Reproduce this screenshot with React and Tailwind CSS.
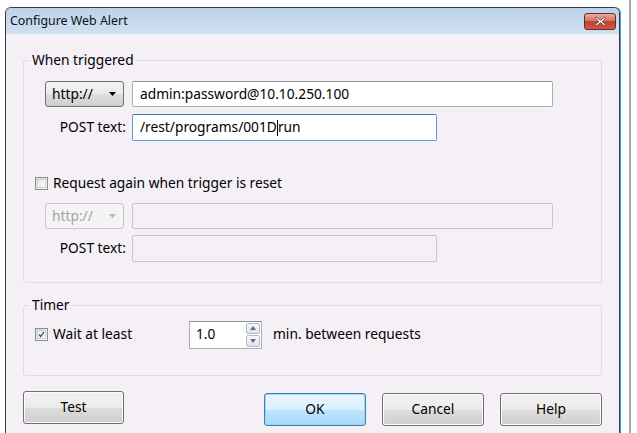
const FONT = { fontFamily: '"Noto Sans", "Open Sans", Arial, sans-serif' };

function Checkbox({ checked }) {
  return (
    <span className="inline-flex w-[13px] h-[13px] shrink-0 items-center justify-center border border-[#8e8f8f] bg-[linear-gradient(135deg,#dcdcdc,#f6f6f6)]">
      <span className="w-[9px] h-[9px] border border-[#d0d0d0] bg-[linear-gradient(135deg,#e6e6e6,#ffffff)] flex items-center justify-center">
        {checked && (
          <svg width="9" height="9" viewBox="0 0 9 9">
            <path d="M1.5 4.5 L3.5 7.2 L7.6 1" fill="none" stroke="#3a4f8f" strokeWidth="1.7" />
          </svg>
        )}
      </span>
    </span>
  );
}

function SchemeSelect({ disabled }) {
  return (
    <div
      className={`w-[79px] h-[26px] rounded-[3px] border flex items-center justify-between pl-[6px] pr-[7px] ${
        disabled
          ? 'border-[#c7c7c7] bg-[#f4f4f4] text-[#a3a3a3]'
          : 'border-[#707070] bg-[linear-gradient(to_bottom,#f2f2f2,#ebebeb_50%,#dddddd_51%,#cfcfcf)] text-black'
      }`}
    >
      <span>http://</span>
      <svg width="7" height="4" viewBox="0 0 7 4">
        <path d="M0 0 H7 L3.5 4 Z" fill={disabled ? '#b5b5b5' : '#000'} />
      </svg>
    </div>
  );
}

function TextBox({ className, focused, disabled, children }) {
  let border = 'border-[#abadb3] border-t-[#8f939c] bg-white';
  if (focused) border = 'border-[#5b9bd5] border-t-[#3d7bad] bg-white';
  if (disabled) border = 'border-[#c7c7c7] bg-[#f4f0f6]';
  return (
    <div className={`border rounded-[2px] flex items-center px-[7px] ${border} ${className}`}>
      {children}
    </div>
  );
}

function Group({ title, className, children }) {
  return (
    <fieldset className="border border-[#d5dfe5] rounded-[3px]">
      <legend className="ml-[6px] px-[2px] leading-[18px]">{title}</legend>
      <div className={className}>{children}</div>
    </fieldset>
  );
}

function Button({ label, primary, className }) {
  return (
    <button
      className={`h-[33px] rounded-[3px] border ${
        primary
          ? 'border-[#3c7fb1] bg-[linear-gradient(to_bottom,#eaf6fd,#d9f0fc_50%,#bee6fd_51%,#a7d9f5)] shadow-[inset_0_0_0_1px_#9ed6f4]'
          : 'border-[#707070] bg-[linear-gradient(to_bottom,#f2f2f2,#ebebeb_50%,#dddddd_51%,#cfcfcf)] shadow-[inset_0_0_0_1px_#fcfcfc]'
      } ${className}`}
    >
      {label}
    </button>
  );
}

function Spinner() {
  return (
    <div className="w-[73px] h-[28px] border border-[#abadb3] border-t-[#8f939c] bg-white flex">
      <span className="flex-1 pl-[6px] leading-[24px]">1.0</span>
      <div className="w-[16px] flex flex-col gap-[1px] p-[1px]">
        {['M0 4 L3 0 L6 4 Z', 'M0 0 H6 L3 4 Z'].map((d) => (
          <div
            key={d}
            className="flex-1 border border-[#b8bcc4] rounded-[2px] bg-[linear-gradient(to_bottom,#f7f7f7,#e2e2e2)] flex items-center justify-center"
          >
            <svg width="6" height="4" viewBox="0 0 6 4">
              <path d={d} fill="#4f6fa8" />
            </svg>
          </div>
        ))}
      </div>
    </div>
  );
}

export default function App() {
  return (
    <div className="w-[637px] h-[433px] bg-white overflow-hidden flex text-[13.75px] text-black" style={FONT}>
      <div className="ml-[5px] mt-[7px] w-[615px] flex flex-col rounded-t-[6px] border border-b-0 border-[#3b3b3b] shadow-[1px_0_0_#3ea0dc] overflow-hidden">
        {/* title bar */}
        <div className="h-[26px] shrink-0 flex items-center justify-between pl-[4px] pr-[3px] bg-[linear-gradient(to_bottom,#b9d1ea,#c4d8ee_40%,#cfe0f2)]">
          <span className="text-[12.4px] text-[#111]">Configure Web Alert</span>
          <div className="w-[32px] h-[17px] rounded-[3px] border border-[#6e2a2a] bg-[linear-gradient(to_bottom,#e9a99c,#d47866_45%,#c0402f_50%,#cc5a44)] flex items-center justify-center">
            <svg width="13" height="11" viewBox="0 0 13 11">
              <path
                d="M2 1 L6.5 4.2 L11 1 L12 2.2 L8 5.5 L12 8.8 L11 10 L6.5 6.8 L2 10 L1 8.8 L5 5.5 L1 2.2 Z"
                fill="#fff"
                stroke="#6b3a3a"
                strokeWidth="0.8"
              />
            </svg>
          </div>
        </div>

        {/* dialog body */}
        <div className="flex-1 bg-[#f4f0f6] px-[17px] pt-[17px]">
          <Group title="When triggered" className="px-[21px] pt-[12px] pb-[20px]">
            <div className="flex items-center gap-[8px]">
              <SchemeSelect />
              <TextBox className="w-[421px] h-[26px]">admin:password@10.10.250.100</TextBox>
            </div>
            <div className="flex items-center mt-[7px]">
              <span className="w-[87px] text-right pr-[6px]">POST text:</span>
              <TextBox className="w-[305px] h-[27px]" focused>
                /rest/programs/001D<span className="inline-block w-[1px] h-[16px] bg-black" />run
              </TextBox>
            </div>

            <label className="flex items-center h-[13px] gap-[5px] -ml-[10px] mt-[36px]">
              <Checkbox />
              <span>Request again when trigger is reset</span>
            </label>

            <div className="flex items-center gap-[8px] mt-[13px]">
              <SchemeSelect disabled />
              <TextBox className="w-[421px] h-[26px]" disabled />
            </div>
            <div className="flex items-center mt-[6px]">
              <span className="w-[87px] text-right pr-[6px]">POST text:</span>
              <TextBox className="w-[305px] h-[27px]" disabled />
            </div>
          </Group>

          <div className="mt-[13px]">
            <Group title="Timer" className="pl-[11px] pt-[7px] pb-[27px]">
              <div className="flex items-center h-[27px]">
                <label className="flex items-center gap-[5px] w-[154px]">
                  <Checkbox checked />
                  <span>Wait at least</span>
                </label>
                <Spinner />
                <span className="ml-[11px]">min. between requests</span>
              </div>
            </Group>
          </div>

          <div className="flex items-start mt-[15px]">
            <Button label="Test" className="w-[101px]" />
            <div className="ml-auto flex gap-[16px] pt-[2px]">
              <Button label="OK" primary className="w-[102px]" />
              <Button label="Cancel" className="w-[102px]" />
              <Button label="Help" className="w-[102px]" />
            </div>
          </div>
        </div>
      </div>
      <div className="ml-[9px] w-[2px] h-full bg-[#a9a9a9]" />
    </div>
  );
}
